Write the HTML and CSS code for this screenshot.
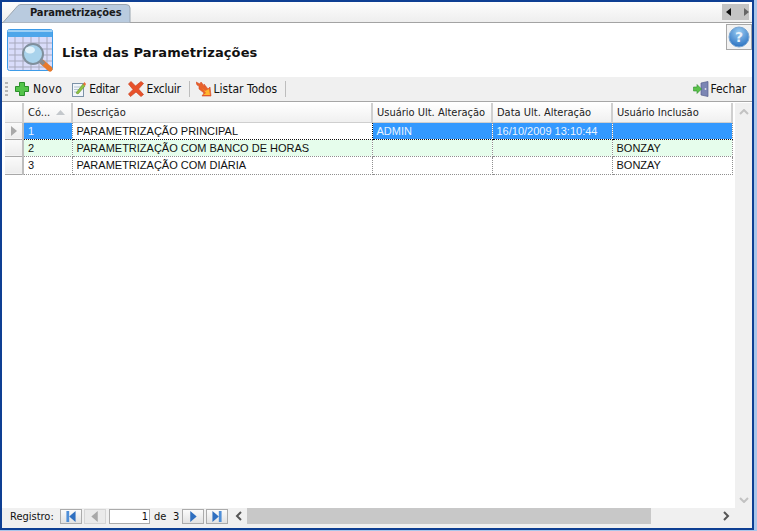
FILE: index.html
```html
<!DOCTYPE html>
<html lang="pt">
<head>
<meta charset="utf-8">
<title>Parametrizações</title>
<link rel="stylesheet" href="styles.css">
</head>
<body>
<div class="window">
  <div class="tabbar">
    <div class="tab">
      <svg class="tab-shape" width="128" height="19" viewBox="0 0 128 19"><path d="M0 18.5 L15 1.5 Q16.500 0.500 18 0.500 H123 Q127 0.500 127 4 V18.500" fill="#b9cbdf" stroke="#9aa5b0"/></svg>
      <span class="tab-label">Parametrizações</span>
    </div>
    <div class="tab-nav">
      <svg width="27" height="16" viewBox="0 0 27 16"><path d="M9 4 V12 L4 8 Z" fill="#111"/><path d="M22 4 V12 L27 8 Z" fill="#666"/></svg>
    </div>
  </div>
  <div class="header">
    <svg class="head-icon" width="46" height="44" viewBox="0 0 46 44">
      <rect x=".5" y=".5" width="45" height="41" rx="2" fill="#d9dcfa" stroke="#3d9be8"/>
      <rect x="1" y="1" width="44" height="7" fill="#4ea6ea"/>
      <rect x="1" y="1" width="44" height="2" fill="#9ed0f5"/>
      <path d="M2 14H45M2 20H45M2 26H45M2 32H45M2 38H45M8 8V41M16 8V41M24 8V41M32 8V41M40 8V41" stroke="#a7a9bd" stroke-width="1"/>
      <path d="M35 33 L43 40" stroke="#e8792a" stroke-width="5" stroke-linecap="round"/>
      <path d="M32 30 L37 35" stroke="#8a8a8a" stroke-width="4"/>
      <circle cx="26" cy="25" r="10" fill="#a9d3ec" stroke="#7f8f9c" stroke-width="2"/>
      <ellipse cx="23" cy="21" rx="5" ry="3.500" fill="#e3f3fb"/>
    </svg>
    <h1 class="title">Lista das Parametrizações</h1>
    <button class="help" type="button" aria-label="Ajuda">
      <svg width="22" height="22" viewBox="0 0 22 22"><defs><radialGradient id="hg" cx=".5" cy=".25" r=".85"><stop offset="0" stop-color="#9accf2"/><stop offset="1" stop-color="#1c66bb"/></radialGradient></defs><circle cx="11" cy="11" r="10" fill="url(#hg)" stroke="#7aa6d2"/><text x="11" y="16" class="help-q" text-anchor="middle">?</text></svg>
    </button>
  </div>
  <div class="toolbar">
    <span class="grip"></span>
    <span class="tool tool-novo">
      <svg width="16" height="16" viewBox="0 0 16 16"><path d="M5.500 1.500H10.500V5.500H14.500V10.500H10.500V14.500H5.500V10.500H1.500V5.500H5.500Z" fill="#54c44a" stroke="#2b8f2b"/></svg>Novo
    </span>
    <span class="tool tool-tight">
      <svg width="16" height="16" viewBox="0 0 16 16"><rect x="1.500" y="2.500" width="11" height="13" fill="#f2f6fa" stroke="#7d93a8"/><path d="M3 6H11M3 8.500H9M3 11H8" stroke="#b5c4d2"/><path d="M5 12 L12 3 L14 5 L7 13 Z" fill="#8fc43f" stroke="#5f8f2a" stroke-width=".6"/><path d="M12 3 L13.500 1 L15 3 L14 5 Z" fill="#e8703a"/></svg>Editar
    </span>
    <span class="tool tool-tight">
      <svg width="16" height="16" viewBox="0 0 16 16"><path d="M3 0.500 L7.500 5 L13 0.500 L15.500 2.500 L10.500 8 L15.500 13.500 L13 15.500 L8 11 L2.500 15.500 L0.500 13 L5 8.500 L0.500 3 Z" fill="#e8512a" stroke="#c9431f" stroke-width=".7"/></svg>Excluir
    </span>
    <span class="sep"></span>
    <span class="tool">
      <svg width="16" height="16" viewBox="0 0 16 16"><path d="M0 1 L4 3 L5 1 L9 6 L8 3 L12 8 L14 6 L15 15 L6 15 L8 12 L3 8 L3 5 L1 4 Z" fill="#e8622a" stroke="#d84a24" stroke-width=".6"/><path d="M6 7 L9 10 L13 8 L14 14 L7 14 L10 12 Z" fill="#ffb52e"/></svg>Listar Todos
    </span>
    <span class="sep"></span>
    <span class="tool tool-end">
      <svg width="16" height="16" viewBox="0 0 16 16"><path d="M8 2 L15 0.500 V15.500 L8 14 Z" fill="#7c86b4" stroke="#56608c" stroke-width=".7"/><circle cx="12.500" cy="8" r=".9" fill="#dde"/><path d="M0.500 6H4V3.500L8.500 8L4 12.500V10H0.500Z" fill="#5bc24a" stroke="#2f8f2f" stroke-width=".6"/></svg>Fechar
    </span>
  </div>
  <div class="content">
    <div class="grid-wrap">
      <table class="grid">
        <colgroup>
          <col class="c-sel"><col class="c-cod"><col class="c-desc"><col class="c-usr"><col class="c-data"><col class="c-inc">
        </colgroup>
        <thead>
          <tr>
            <th></th>
            <th class="sorted">Có...<svg class="sort" width="9" height="5" viewBox="0 0 9 5"><path d="M4.500 0 L9 5 H0 Z" fill="#c4c8cc"/></svg></th>
            <th>Descrição</th>
            <th>Usuário Ult. Alteração</th>
            <th>Data Ult. Alteração</th>
            <th>Usuário Inclusão</th>
          </tr>
        </thead>
        <tbody>
          <tr class="selected">
            <th class="rowh"><svg width="6" height="10" viewBox="0 0 6 10"><path d="M0 0 L6 5 L0 10 Z" fill="#a8a8a8"/></svg></th>
            <td>1</td><td class="current">PARAMETRIZAÇÃO PRINCIPAL</td><td>ADMIN</td><td>16/10/2009 13:10:44</td><td></td>
          </tr>
          <tr class="alt">
            <th class="rowh"></th>
            <td>2</td><td>PARAMETRIZAÇÃO COM BANCO DE HORAS</td><td></td><td></td><td>BONZAY</td>
          </tr>
          <tr>
            <th class="rowh"></th>
            <td>3</td><td>PARAMETRIZAÇÃO COM DIÁRIA</td><td></td><td></td><td>BONZAY</td>
          </tr>
        </tbody>
      </table>
    </div>
    <div class="vscroll">
      <svg width="10" height="6" viewBox="0 0 10 6"><path d="M1 5 L5 1 L9 5" fill="none" stroke="#c2c2c2" stroke-width="2"/></svg>
      <svg width="10" height="6" viewBox="0 0 10 6"><path d="M1 1 L5 5 L9 1" fill="none" stroke="#c2c2c2" stroke-width="2"/></svg>
    </div>
  </div>
  <div class="footer">
    <span class="reg">Registro:</span>
    <span class="nav"><svg width="14" height="12" viewBox="0 0 14 12"><rect x="2" y="0" width="3" height="12" fill="#4f8fd8"/><path d="M12 0 V12 L5 6 Z" fill="#2f6fc0"/></svg></span>
    <span class="nav nav-off"><svg width="14" height="12" viewBox="0 0 14 12"><path d="M10 0 V12 L3 6 Z" fill="#a8a8a8"/></svg></span>
    <span class="pos">1</span>
    <span class="de">de</span>
    <span class="total">3</span>
    <span class="nav"><svg width="14" height="12" viewBox="0 0 14 12"><path d="M4 0 V12 L11 6 Z" fill="#2f6fc0"/></svg></span>
    <span class="nav"><svg width="14" height="12" viewBox="0 0 14 12"><path d="M2 0 V12 L9 6 Z" fill="#2f6fc0"/><rect x="9" y="0" width="3" height="12" fill="#4f8fd8"/></svg></span>
    <div class="hscroll">
      <svg class="harrow" width="7" height="10" viewBox="0 0 7 10"><path d="M6 1 L2 5 L6 9" fill="none" stroke="#555" stroke-width="2"/></svg>
      <span class="thumb"></span>
      <svg class="harrow" width="7" height="10" viewBox="0 0 7 10"><path d="M1 1 L5 5 L1 9" fill="none" stroke="#555" stroke-width="2"/></svg>
    </div>
  </div>
</div>
</body>
</html>
```
FILE: styles.css
```css
* { box-sizing: border-box; }
html, body { margin: 0; height: 100%; background: #a9c6ea; }
body { font-family: "DejaVu Sans", sans-serif; font-stretch: condensed; font-size: 11px; color: #111; overflow: hidden; }
.window { width: 754px; height: 530px; border: 2px solid #0e3f93; background: #fff; display: flex; flex-direction: column; }
.tabbar { height: 21px; flex: none; display: flex; justify-content: space-between; padding: 2px 3px 0 1px; background: linear-gradient(#fdfdfd, #eeeeee); border-bottom: 1px solid #a3a3a3; }
.tab { position: relative; width: 128px; height: 19px; }
.tab-shape { position: absolute; left: 0; top: 0; }
.tab-label { position: absolute; left: 27px; top: 2px; font-weight: bold; font-size: 11px; line-height: 14px; letter-spacing: -0.1px; color: #1a1a1a; }
.tab-nav { width: 27px; height: 16px; background: #c4c4c4; }
.tab-nav svg { display: block; }
.header { height: 54px; flex: none; display: flex; align-items: flex-start; padding: 6px 0 0 5px; background: #fff; }
.head-icon { flex: none; }
.title { margin: 16px 0 0 9px; flex: 1; font-size: 13px; line-height: 16px; font-weight: bold; font-stretch: normal; letter-spacing: 0.12px; color: #111; }
.help { width: 26px; height: 26px; margin-top: -5px; padding: 0; border: 1px solid #a8a8a8; background: #f2f2f2; display: flex; align-items: center; justify-content: center; }
.help-q { font-family: "DejaVu Sans", sans-serif; font-size: 14px; font-weight: bold; fill: #e8f2fb; }
.toolbar { height: 25px; flex: none; display: flex; align-items: center; padding: 0 6px 0 3px; background: #f0f0f0; border-bottom: 1px solid #a6a6a6; font-size: 12px; }
.grip { width: 3px; height: 15px; margin-right: 7px; background: repeating-linear-gradient(#b5b5b5 0 2px, transparent 2px 4px); }
.tool { display: flex; align-items: center; gap: 2px; margin-right: 9px; white-space: nowrap; }
.tool-novo { gap: 3px; letter-spacing: 0.4px; margin-left: -1px; }
.tool-tight { letter-spacing: -0.3px; }
.tool-end { margin: 0 0 0 auto; letter-spacing: -0.1px; }
.sep { width: 1px; height: 16px; background: #bdbdbd; margin: 0 6px 0 -1px; }
.content { flex: 1; min-height: 0; display: flex; padding-top: 1px; background: #fff; }
.grid-wrap { flex: 1; min-width: 0; padding-left: 3px; }
.grid { table-layout: fixed; width: 727px; border-collapse: collapse; font-size: 11px; }
.c-sel { width: 18px; } .c-cod { width: 49px; } .c-desc { width: 300px; } .c-usr { width: 120px; } .c-data { width: 120px; } .c-inc { width: 120px; }
.grid thead th { height: 19px; padding: 1px 4px 0; font-weight: normal; text-align: left; white-space: nowrap; overflow: hidden; background: linear-gradient(#ffffff, #f0f0f0); border-right: 2px solid #cfcfcf; border-bottom: 1px solid #cfcfcf; color: #222; position: relative; }
.sort { position: absolute; right: 6px; top: 7px; }
.grid td { height: 17px; padding: 1px 3px 0 4px; font-family: "Liberation Sans", sans-serif; font-size: 11px; vertical-align: top; white-space: nowrap; overflow: hidden; border-right: 1px dotted #8f8f8f; border-bottom: 1px dotted #8f8f8f; line-height: 14px; }
.grid tbody tr:last-child td { height: 18px; }
.grid .rowh { padding: 0 0 0 6px; background: linear-gradient(#fafafa, #ececec); border-right: 2px solid #bdbdbd; border-bottom: 1px solid #a8a8a8; text-align: left; font-weight: normal; }
.rowh svg { display: block; }
.selected td { background: #3399ff; color: #e8f3ff; border-bottom: 1px dotted #111; border-top: 1px dotted #111; }
.selected td.current { background: #fff; color: #111; border: 1px dotted #111; }
.alt td { background: #e6fdec; }
.vscroll { width: 17px; flex: none; background: #f0f0f0; display: flex; flex-direction: column; justify-content: space-between; align-items: center; padding: 6px 0 5px; }
.vscroll svg { display: block; }
.footer { height: 20px; flex: none; display: flex; align-items: flex-start; padding: 1px 0 0 8px; background: #f0f0f0; line-height: 15px; }
.reg { width: 50px; flex: none; }
.nav { width: 22px; height: 15px; flex: none; margin-right: 2px; display: flex; align-items: center; justify-content: center; border: 1px solid #ababab; background: linear-gradient(#fbfbfb, #e2e2e2); }
.nav svg { height: 11px; }
.nav-off { background: #eaeaea; border-color: #d5d5d5; }
.pos { width: 41px; height: 15px; flex: none; margin-left: 1px; padding-right: 1px; text-align: right; line-height: 13px; background: #fff; border: 1px solid #ababab; }
.de { width: 20px; padding-left: 4px; flex: none; }
.total { width: 12px; padding-left: 3px; flex: none; }
.hscroll { flex: 1; min-width: 0; display: flex; align-items: center; margin-top: -1px; height: 16px; padding: 0; }
.harrow { flex: none; margin: 0 5px; }
.thumb { width: 404px; height: 16px; background: #c8c8c8; flex: none; }
.thumb + .harrow { margin-left: auto; margin-right: 22px; }
```
